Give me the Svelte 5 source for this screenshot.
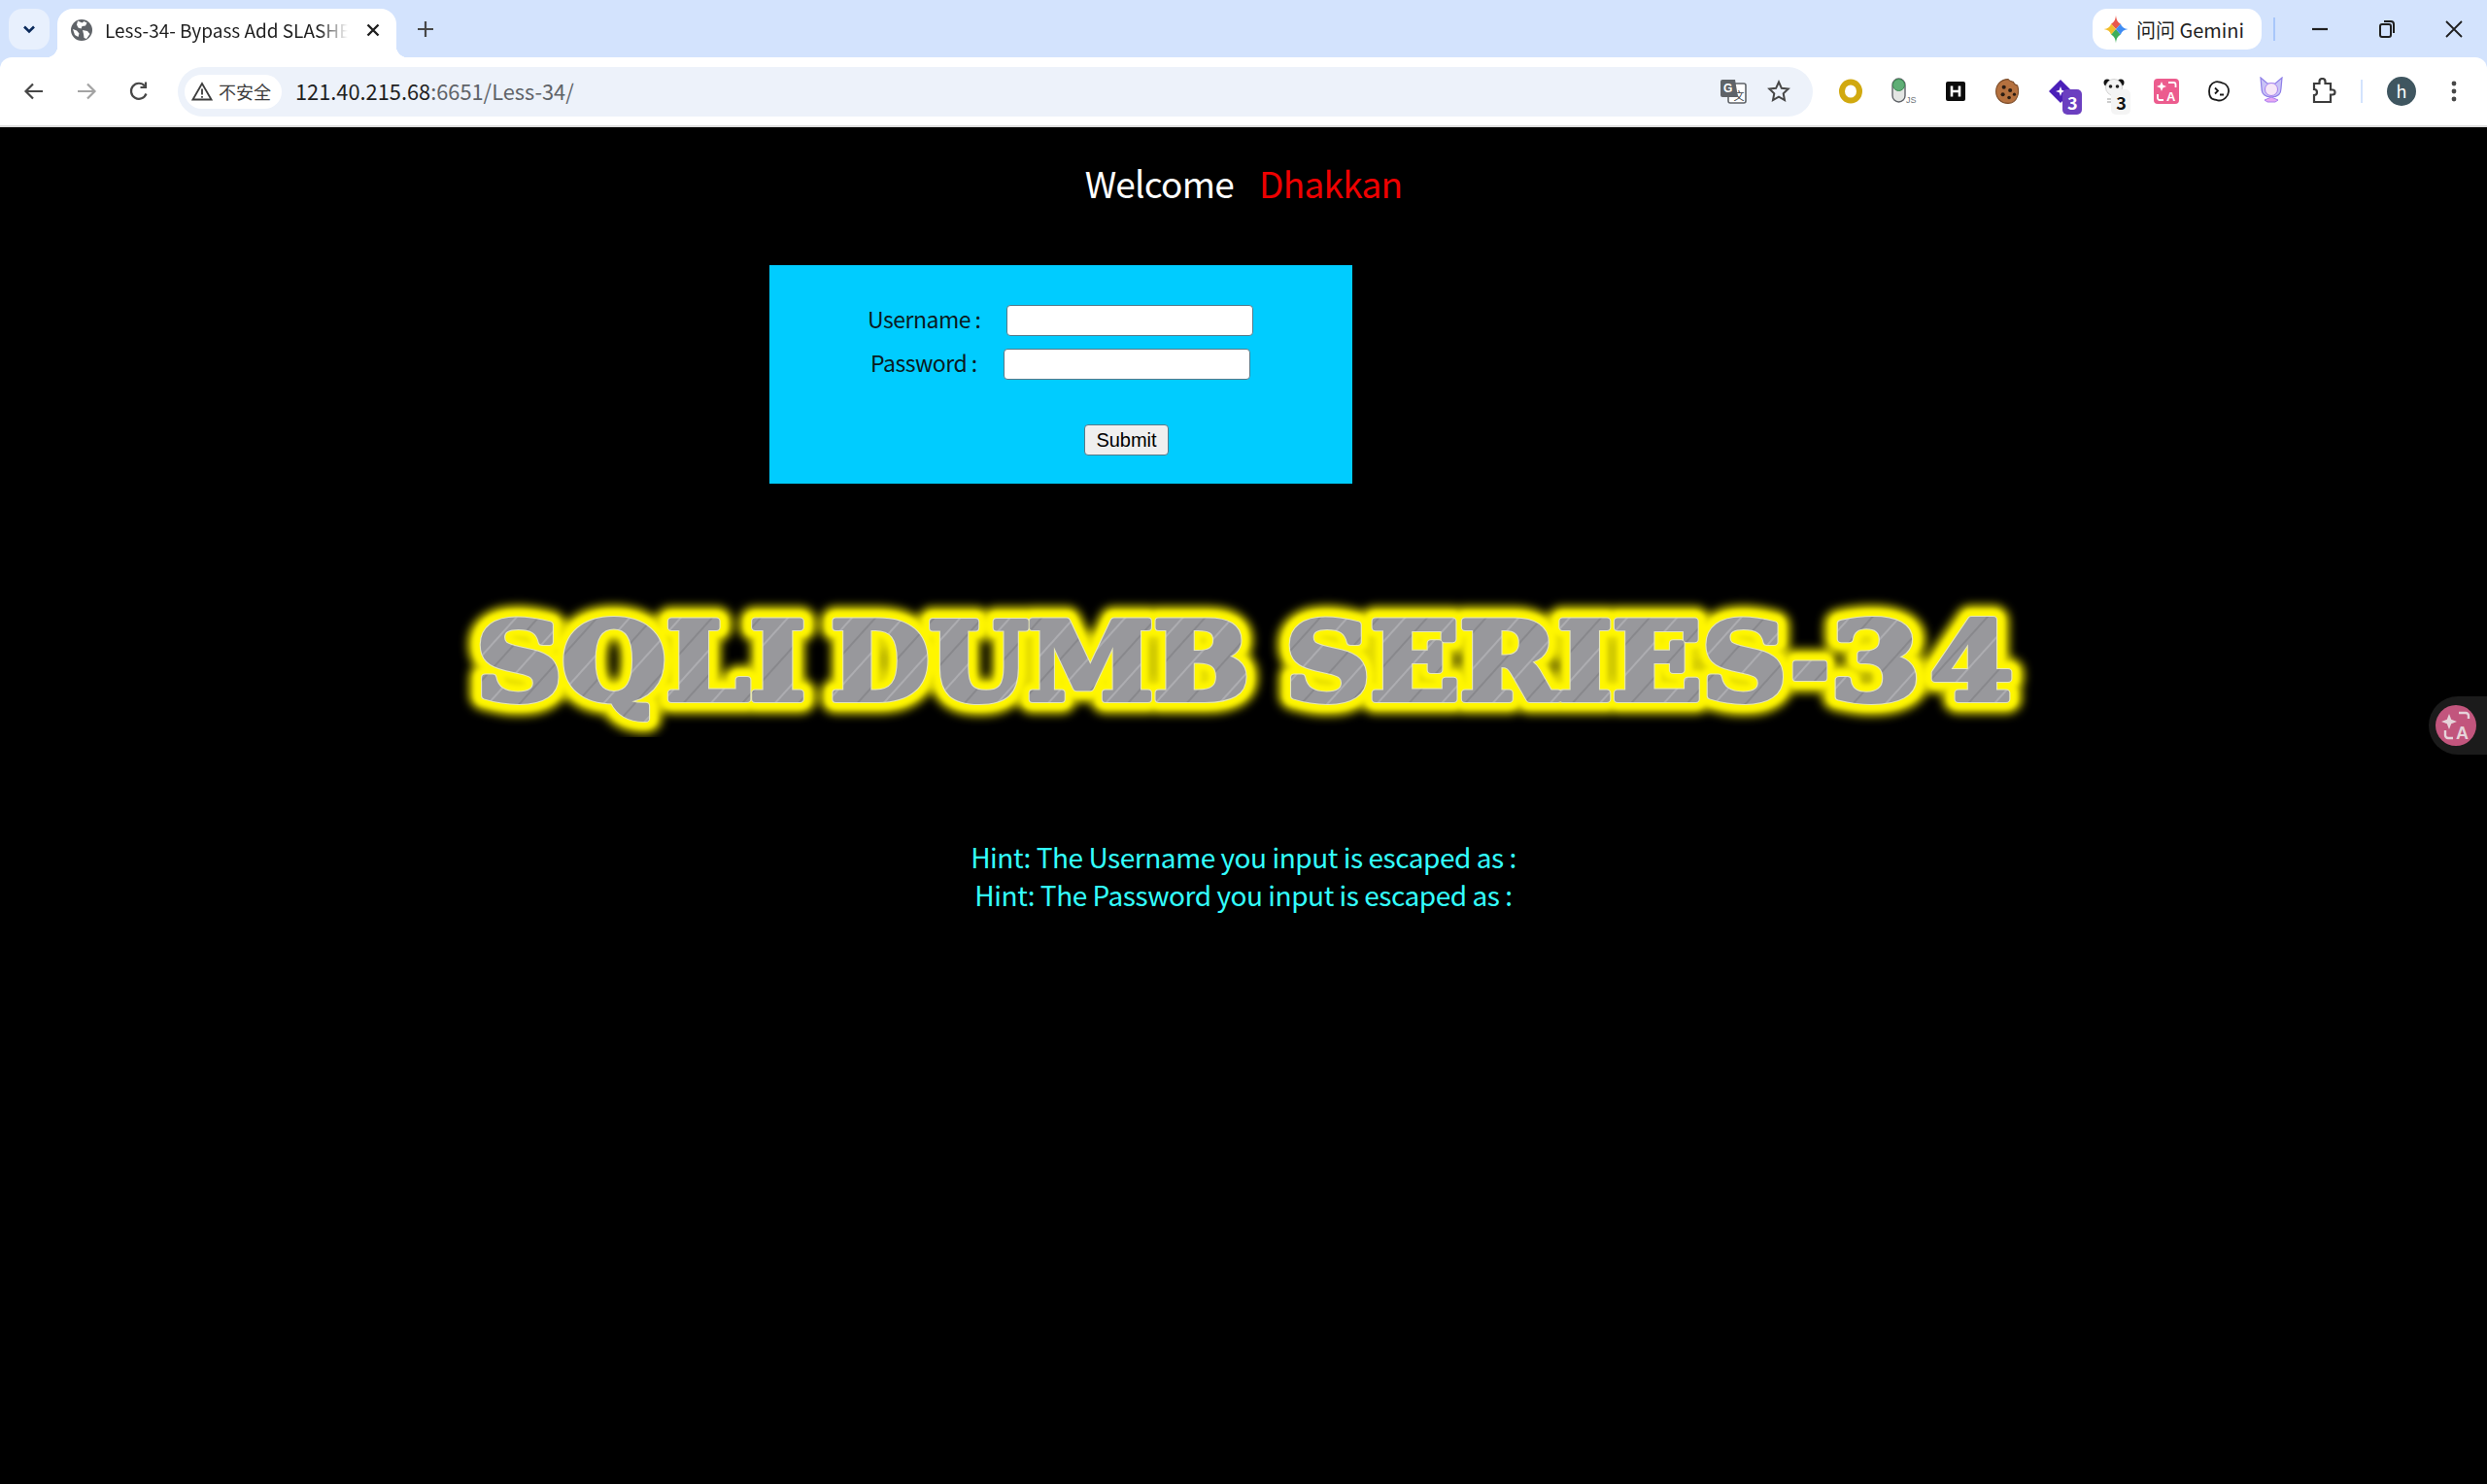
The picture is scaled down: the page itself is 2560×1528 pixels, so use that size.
<script lang="ts">
	const words = [
		{ text: 'SQLI', x: 490, w: 339 },
		{ text: 'DUMB', x: 855, w: 431 },
		{ text: 'SERIES', x: 1323, w: 516 },
		{ text: '-', x: 1843, w: 40 },
		{ text: '3', x: 1884, w: 93 },
		{ text: '4', x: 1987, w: 85 }
	];
</script>

<div class="page">
	<header class="chrome">
		<div class="tabstrip">
			<button type="button" class="tab-search" aria-label="Search tabs">
				<svg width="16" height="16" viewBox="0 0 16 16" fill="none" stroke="#0b2a5b" stroke-width="2.6">
					<path d="M3 5.5l5 5 5-5" />
				</svg>
			</button>
			<div class="tab">
				<svg class="favicon" width="24" height="24" viewBox="0 0 24 24">
					<circle cx="12" cy="12" r="11" fill="#5f6368" />
					<path d="M8 2.5l4.5 2 2-1.5 3 1.5-1.5 3-3.5.5-1 2.5-3-1-1.5-3zM13 12l5 1 2.5 3-3.5 5-2.500-1-.5-4z M3 11l4 1.500 2.500 3L8.500 19 5 17z" fill="#fff" />
				</svg>
				<span class="tab-title">Less-34- Bypass Add SLASHES</span>
				<svg class="tab-close" width="16" height="16" viewBox="0 0 16 16" stroke="#1f1f1f" stroke-width="2.400">
					<path d="M2.500 2.500l11 11M13.500 2.500l-11 11" />
				</svg>
			</div>
			<svg class="new-tab" width="18" height="18" viewBox="0 0 18 18" stroke="#474747" stroke-width="2.200">
				<path d="M9 1v16M1 9h16" />
			</svg>
			<div class="strip-right">
				<div class="gemini">
					<svg width="26" height="30" viewBox="0 0 24 24" preserveAspectRatio="none">
						<path d="M12 12L7.500 7.500C10 6.500 11.600 4.500 12 .5c.4 4 2 6 4.500 7z" fill="#e8584c" />
						<path d="M12 12L7.500 7.500C6.500 10 4.500 11.600.5 12c4 .4 6 2 7 4.500z" fill="#f2bd2c" />
						<path d="M12 12l-4.500 4.500c2.500 1 4.100 3 4.500 7 .4-4 2-6 4.500-7z" fill="#3fae5a" />
						<path d="M12 12l4.500-4.500c1 2.500 3 4.100 7 4.500-4 .4-6 2-7 4.500z" fill="#3f8cf3" />
					</svg>
					<span>问问 Gemini</span>
				</div>
				<i class="strip-divider"></i>
				<svg class="win-min" width="16" height="4" viewBox="0 0 16 4"><path d="M0 2h16" stroke="#1f1f1f" stroke-width="2.200" /></svg>
				<svg class="win-restore" width="18" height="20" viewBox="0 0 18 20" fill="none" stroke="#1f1f1f" stroke-width="2">
					<rect x="2" y="5" width="11" height="13" rx="2" />
					<path d="M6 2h7a3 3 0 0 1 3 3v9" />
				</svg>
				<svg class="win-close" width="18" height="18" viewBox="0 0 18 18" stroke="#1f1f1f" stroke-width="1.800">
					<path d="M1 1l16 16M17 1L1 17" />
				</svg>
			</div>
		</div>

		<div class="toolbar">
			<div class="nav-btn">
				<svg width="24" height="24" viewBox="0 0 24 24" fill="none" stroke="#474747" stroke-width="2.200">
					<path d="M21 12H4M11 4.500L3.500 12l7.500 7.500" />
				</svg>
			</div>
			<div class="nav-btn">
				<svg width="24" height="24" viewBox="0 0 24 24" fill="none" stroke="#a3a3a3" stroke-width="2.200">
					<path d="M3 12h17M13 4.500l7.500 7.500-7.500 7.500" />
				</svg>
			</div>
			<div class="nav-btn">
				<svg width="24" height="24" viewBox="0 0 24 24" fill="none" stroke="#474747" stroke-width="2.200">
					<path d="M19.500 14.500A8 8 0 1 1 18 6.500" />
					<path d="M19 2.500V8h-5.500" />
				</svg>
			</div>
			<div class="omnibox">
				<div class="chip">
					<svg width="22" height="20" viewBox="0 0 22 20" fill="none" stroke="#3c3c3c" stroke-width="1.800">
						<path d="M11 2L1.500 18.500h19z" />
						<path d="M11 7.500v6M11 15v1.800" />
					</svg>
					<span>不安全</span>
				</div>
				<div class="url"><span class="host">121.40.215.68</span>:6651/Less-34/</div>
				<svg class="g-translate" width="28" height="28" viewBox="0 0 28 28">
					<rect x="9" y="6" width="18" height="20" rx="2" fill="#fff" stroke="#5f6368" stroke-width="1.600" />
					<text x="14.500" y="23" font-size="11" fill="#3c4043" font-family="Noto Sans CJK SC">文</text>
					<path d="M3 2h13l3 18H3a2 2 0 0 1-2-2V4a2 2 0 0 1 2-2z" fill="#5f6368" />
					<text x="4" y="15" font-size="12" font-weight="700" fill="#fff" font-family="Liberation Sans">G</text>
				</svg>
				<svg class="star" width="24" height="24" viewBox="0 0 24 24" fill="none" stroke="#474747" stroke-width="2">
					<path d="M12 2.500l2.900 6.300 6.800.8-5 4.700 1.300 6.800-6-3.400-6 3.400 1.300-6.800-5-4.700 6.800-.8z" />
				</svg>
			</div>
			<div class="extensions">
				<div class="ext">
					<svg width="26" height="26" viewBox="0 0 26 26" fill="none"><ellipse cx="13" cy="13" rx="9" ry="9.500" stroke="#d1a90f" stroke-width="6" /></svg>
				</div>
				<div class="ext">
					<svg width="34" height="30" viewBox="-2 0 34 30">
						<rect x="4" y="2" width="13" height="24" rx="6.500" fill="#e3e5e3" stroke="#5f6368" stroke-width="1.400" />
						<circle cx="10.500" cy="8.500" r="6" fill="#5fae76" stroke="#3b8a52" />
						<text x="18" y="27" font-size="9" fill="#70757a" font-family="Liberation Sans">JS</text>
					</svg>
				</div>
				<div class="ext">
					<svg width="20" height="20" viewBox="0 0 20 20">
						<rect width="20" height="20" rx="2" fill="#0b0b0b" />
						<path d="M6 4.500v11M14 4.500v11M6 10h8" stroke="#fff" stroke-width="2.600" />
					</svg>
				</div>
				<div class="ext">
					<svg width="28" height="28" viewBox="0 0 26 26">
						<path d="M13 1.500c1 2 3.500 2 5 2.500 .5 2 2.500 3 4 3.500 2 6 .5 17-9 17C5.500 24.500 1.500 19 1.500 13S6 1.500 13 1.500z" fill="#b5713f" stroke="#7a4a27" />
						<circle cx="9" cy="9" r="1.900" fill="#2a1c12" />
						<circle cx="15" cy="12" r="1.900" fill="#2a1c12" />
						<circle cx="8" cy="16" r="1.900" fill="#2a1c12" />
						<circle cx="14" cy="19" r="1.700" fill="#2a1c12" />
						<circle cx="19" cy="16" r="1.500" fill="#2a1c12" />
					</svg>
				</div>
				<div class="ext">
					<svg width="26" height="26" viewBox="0 0 26 26">
						<path d="M13 1l12 12-12 12L1 13z" fill="#4a1fb8" />
						<path d="M13 8l1.300 3.700L18 13l-3.700 1.300L13 18l-1.300-3.700L8 13l3.700-1.300z" fill="#fff" />
					</svg>
					<span class="badge badge-purple">3</span>
				</div>
				<div class="ext">
					<svg width="24" height="28" viewBox="0 0 24 28">
						<circle cx="5" cy="5" r="3.500" fill="#111" />
						<circle cx="19" cy="5" r="3.500" fill="#111" />
						<circle cx="12" cy="10" r="8.500" fill="#f4f4f4" stroke="#bbb" stroke-width=".6" />
						<circle cx="8.500" cy="9" r="1.800" fill="#222" />
						<circle cx="15.500" cy="9" r="1.800" fill="#222" />
						<path d="M5 22h9M5 25h9" stroke="#999" stroke-width="1.200" />
					</svg>
					<span class="badge badge-light">3</span>
				</div>
				<div class="ext">
					<svg width="26" height="26" viewBox="0 0 26 26">
						<rect width="26" height="26" rx="4" fill="#ec5c8e" />
						<path d="M8 3l1.400 3.600L13 8 9.400 9.400 8 13l-1.400-3.600L3 8l3.600-1.400z" fill="#fff" />
						<path d="M15 4h5.500a2 2 0 0 1 2 2v3M10 22H6a2 2 0 0 1-2-2v-4" fill="none" stroke="#fff" stroke-width="1.800" />
						<text x="13" y="23" font-size="13" font-weight="700" fill="#fff" font-family="Liberation Sans">A</text>
					</svg>
				</div>
				<div class="ext">
					<svg width="24" height="24" viewBox="0 0 24 24" fill="none" stroke="#1a1a1a" stroke-width="1.800">
						<path d="M8 2.500c3-1.500 5 .5 8 1 4 1 6.500 5 6 9-.5 5-5 9-10 9-2 0-3-1-4.500-1C4 20 2 16.500 2 12c0-4 2-8 6-9.500z" />
						<path d="M8 8.500l3 3-3 3M13 15.500h4" />
					</svg>
				</div>
				<div class="ext">
					<svg width="28" height="30" viewBox="0 0 28 30">
						<path d="M3 1l7 6h8l7-6-1 11c0 6-4 9-10 9S4 18 4 12z" fill="#c9c3f6" stroke="#8f7fe8" stroke-width="1.200" />
						<circle cx="14" cy="13" r="6.500" fill="#f6e6f7" stroke="#a77ff0" />
						<path d="M7 24l7-3 7 3-3 2h-8z" fill="#e7a8f2" stroke="#a77ff0" />
					</svg>
				</div>
				<div class="ext">
					<svg width="26" height="28" viewBox="0 0 26 28" fill="none" stroke="#3c3c3c" stroke-width="2.200">
						<path d="M3 6h5.500V4a3 3 0 0 1 6 0v2H20v6.500h2a2.500 2.500 0 0 1 0 5h-2V25H3v-7c2 0 3-1.200 3-3s-1-3-3-3z" />
					</svg>
				</div>
			</div>
			<i class="bar-divider"></i>
			<div class="avatar">h</div>
			<svg class="menu" width="8" height="24" viewBox="0 0 8 24" fill="#474747">
				<circle cx="4" cy="4" r="2.400" /><circle cx="4" cy="12" r="2.400" /><circle cx="4" cy="20" r="2.400" />
			</svg>
		</div>
	</header>

	<main class="content">
		<div class="welcome"><span>Welcome</span><span class="name">Dhakkan</span></div>

		<form class="login" onsubmit={(e) => e.preventDefault()}>
			<div class="row row-user">
				<label for="uname">Username :</label>
				<input id="uname" type="text" />
			</div>
			<div class="row row-pass">
				<label for="passwd">Password :</label>
				<input id="passwd" type="text" />
			</div>
			<div class="row row-submit">
				<button type="submit">Submit</button>
			</div>
		</form>

		<svg class="banner" width="2560" height="150" viewBox="0 610 2560 150">
			<defs>
				<pattern id="brushed" width="170" height="170" patternUnits="userSpaceOnUse" patternTransform="rotate(-48)">
					<rect width="170" height="170" fill="#98989c" />
					<path d="M0 9h170M0 58h170M0 97h170M0 141h170" stroke="#adadb1" stroke-width="1.800" />
					<path d="M0 33h170M0 76h170M0 121h170M0 158h170" stroke="#88888c" stroke-width="1.800" />
				</pattern>
				<filter id="glow-wide" x="-5%" y="-30%" width="110%" height="160%">
					<feGaussianBlur stdDeviation="5" />
				</filter>
				<filter id="glow-tight" x="-5%" y="-30%" width="110%" height="160%">
					<feGaussianBlur stdDeviation="2" />
				</filter>
			</defs>
			<g class="banner-text" filter="url(#glow-wide)">
				{#each words as word}
					<text x={word.x} y="721" textLength={word.w} lengthAdjust="spacingAndGlyphs" fill="#e8e000" stroke="#e8e000" stroke-width="30" stroke-linejoin="round">{word.text}</text>
				{/each}
			</g>
			<g class="banner-text" filter="url(#glow-tight)">
				{#each words as word}
					<text x={word.x} y="721" textLength={word.w} lengthAdjust="spacingAndGlyphs" fill="#fff600" stroke="#fff600" stroke-width="20" stroke-linejoin="round">{word.text}</text>
				{/each}
			</g>
			<g class="banner-text">
				{#each words as word}
					<text x={word.x} y="721" textLength={word.w} lengthAdjust="spacingAndGlyphs" fill="none" stroke="#e6e6b8" stroke-width="8" stroke-linejoin="round">{word.text}</text>
				{/each}
				{#each words as word}
					<text x={word.x} y="721" textLength={word.w} lengthAdjust="spacingAndGlyphs" fill="url(#brushed)" stroke="url(#brushed)" stroke-width="6" stroke-linejoin="round">{word.text}</text>
				{/each}
			</g>
		</svg>

		<div class="hints">
			<div>Hint: The Username you input is escaped as :</div>
			<div>Hint: The Password you input is escaped as :</div>
		</div>

		<div class="float-translate">
			<svg width="42" height="42" viewBox="0 0 42 42">
				<circle cx="21" cy="21" r="21" fill="#c2557d" />
				<path d="M14 9l2.200 5.800L22 17l-5.800 2.200L14 25l-2.200-5.800L6 17l5.800-2.200z" fill="#e6d3da" />
				<path d="M24 8h7a3 3 0 0 1 3 3v3M18 34h-5a3 3 0 0 1-3-3v-5" fill="none" stroke="#e6d3da" stroke-width="2.400" />
				<text x="21" y="35" font-size="18" font-weight="700" fill="#e6d3da" font-family="Liberation Sans">A</text>
			</svg>
		</div>
	</main>
</div>

<style>
	:global(body) {
		background: #000;
		overflow: hidden;
	}

	.page {
		width: 2560px;
		height: 1528px;
		display: flex;
		flex-direction: column;
		font-family: 'Noto Sans CJK SC', 'Noto Sans', sans-serif;
	}

	.chrome {
		flex: none;
		background: #d3e3fd;
	}

	.tabstrip {
		height: 59px;
		display: flex;
		align-items: flex-start;
		padding: 9px 0 0 9px;
		box-sizing: border-box;
	}

	.tab-search {
		width: 42px;
		height: 42px;
		border: none;
		padding: 0;
		border-radius: 14px;
		background: #e8f0fd;
		display: flex;
		align-items: center;
		justify-content: center;
	}

	.tab {
		position: relative;
		width: 349px;
		height: 50px;
		margin-left: 8px;
		background: #fff;
		border-radius: 16px 16px 0 0;
		display: flex;
		align-items: center;
		padding: 0 16px 6px 13px;
		box-sizing: border-box;
	}

	.tab::before,
	.tab::after {
		content: '';
		position: absolute;
		bottom: 0;
		width: 12px;
		height: 12px;
	}

	.tab::before {
		left: -12px;
		background: radial-gradient(circle at 0 0, transparent 12px, #fff 12.500px);
	}

	.tab::after {
		right: -12px;
		background: radial-gradient(circle at 100% 0, transparent 12px, #fff 12.500px);
	}

	.favicon {
		flex: none;
	}

	.tab-title {
		width: 250px;
		margin-left: 12px;
		font-size: 19px;
		line-height: 28px;
		color: #1f1f1f;
		white-space: nowrap;
		overflow: hidden;
		-webkit-mask-image: linear-gradient(90deg, #000 88%, transparent);
		mask-image: linear-gradient(90deg, #000 88%, transparent);
	}

	.tab-close {
		flex: none;
		margin-left: 18px;
	}

	.new-tab {
		margin: 12px 0 0 21px;
	}

	.strip-right {
		margin-left: auto;
		display: flex;
		align-items: center;
		height: 42px;
	}

	.gemini {
		width: 174px;
		height: 42px;
		background: #fff;
		border-radius: 15px;
		display: flex;
		align-items: center;
		padding-left: 11px;
		box-sizing: border-box;
		gap: 8px;
		font-size: 20px;
		color: #1f1f1f;
	}

	.strip-divider {
		width: 2px;
		height: 24px;
		margin-left: 12px;
		background: #a8c7fa;
	}

	.win-min {
		margin-left: 38px;
	}

	.win-restore {
		margin-left: 52px;
	}

	.win-close {
		margin: 0 25px 0 51px;
	}

	.toolbar {
		height: 72px;
		box-sizing: border-box;
		background: #fff;
		border-bottom: 2px solid #dcdcdc;
		border-radius: 12px 12px 0 0;
		display: flex;
		align-items: center;
		padding-left: 8px;
	}

	.nav-btn {
		width: 54px;
		display: flex;
		justify-content: center;
	}

	.omnibox {
		width: 1683px;
		height: 51px;
		margin-left: 13px;
		background: #edf2fa;
		border-radius: 26px;
		display: flex;
		align-items: center;
		padding-left: 7px;
		box-sizing: border-box;
	}

	.chip {
		width: 100px;
		height: 35px;
		background: #fff;
		border-radius: 18px;
		display: flex;
		align-items: center;
		padding-left: 7px;
		gap: 6px;
		box-sizing: border-box;
		font-size: 18px;
		color: #3c3c3c;
	}

	.url {
		margin: 0 0 2px 14px;
		font-size: 21.800px;
		color: #5f6368;
	}

	.host {
		color: #1f1f1f;
	}

	.g-translate {
		margin-left: auto;
	}

	.star {
		margin: 0 23px 0 21px;
	}

	.extensions {
		display: flex;
		margin-left: 12px;
	}

	.ext {
		position: relative;
		width: 54.100px;
		height: 36px;
		display: flex;
		align-items: center;
		justify-content: center;
	}

	.badge {
		position: absolute;
		font-size: 18px;
		line-height: 26px;
		font-weight: 700;
		text-align: center;
		width: 20px;
		height: 26px;
		border-radius: 5px;
		top: 16px;
	}

	.badge-purple {
		left: 29px;
		background: #6b3fc0;
		color: #fff;
	}

	.badge-light {
		left: 25px;
		background: #f4f4f4;
		color: #111;
	}

	.bar-divider {
		width: 2px;
		height: 24px;
		margin-left: 11px;
		background: #d3e3fd;
	}

	.avatar {
		width: 30px;
		height: 30px;
		margin-left: 25px;
		border-radius: 50%;
		background: #3f5660;
		color: #fff;
		font-size: 18px;
		line-height: 28px;
		text-align: center;
	}

	.menu {
		margin-left: 35px;
	}

	.content {
		position: relative;
		flex: 1;
		background: #000;
	}

	.welcome {
		height: 142px;
		padding-top: 30px;
		box-sizing: border-box;
		display: flex;
		justify-content: center;
		gap: 26px;
		font-size: 37px;
		letter-spacing: -0.75px;
		line-height: 54px;
		color: #fff;
	}

	.name {
		color: #ee0000;
	}

	.login {
		width: 600px;
		height: 225px;
		margin-left: 792px;
		padding-top: 41px;
		box-sizing: border-box;
		background: #00ccff;
		display: flex;
		flex-direction: column;
		gap: 13px;
	}

	.row {
		display: flex;
		align-items: center;
		height: 32px;
		font-size: 23px;
		letter-spacing: -0.5px;
		color: #0a1a22;
	}

	.row label {
		margin-bottom: 4px;
	}

	.row-user {
		padding-left: 101px;
		gap: 26px;
	}

	.row-pass {
		padding-left: 104px;
		gap: 27px;
	}

	.row-submit {
		margin-top: 33px;
		padding-left: 324px;
	}

	input {
		width: 254px;
		height: 32px;
		box-sizing: border-box;
		background: #fff;
		border: 1px solid #557a8a;
		border-radius: 4px;
		padding: 0;
	}

	button[type='submit'] {
		width: 87px;
		height: 32px;
		padding: 0;
		background: #efefef;
		border: 1px solid #557a8a;
		border-radius: 4px;
		font-family: 'Liberation Sans', sans-serif;
		font-size: 20px;
		letter-spacing: 0;
		color: #000;
	}

	.banner {
		display: block;
		margin-top: 111px;
	}

	.banner-text {
		font-family: 'DejaVu Serif', serif;
		font-weight: 700;
		font-size: 111px;
	}

	.hints {
		margin-top: 104px;
		text-align: center;
		font-size: 28px;
		letter-spacing: -0.45px;
		line-height: 39px;
		color: #33ffff;
	}

	.float-translate {
		position: absolute;
		right: 0;
		top: 586px;
		width: 60px;
		height: 60px;
		border-radius: 30px 0 0 30px;
		background: #1b1b1b;
		display: flex;
		align-items: center;
		padding-left: 7px;
		box-sizing: border-box;
	}
</style>
